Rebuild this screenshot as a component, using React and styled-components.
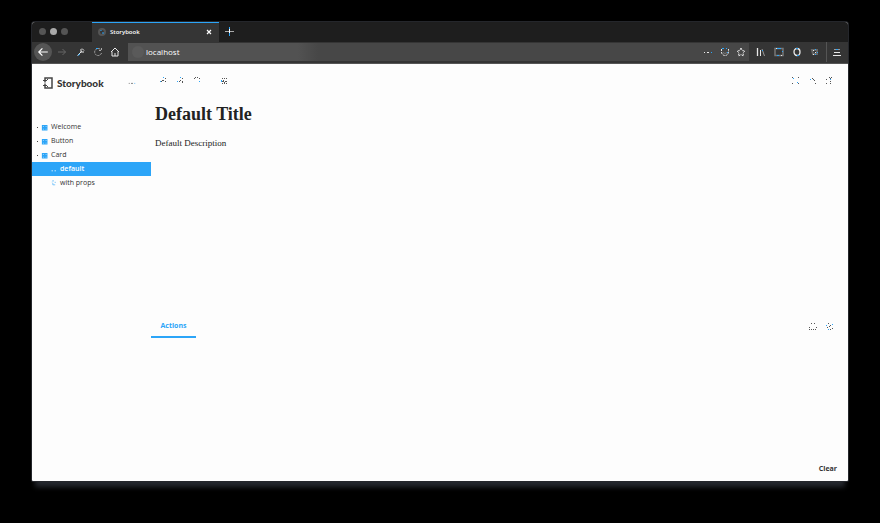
import React from "react";
import styled, { createGlobalStyle } from "styled-components";

const blue = "#2ca5f8";

const Global = createGlobalStyle`
  *, *::before, *::after { box-sizing: border-box; }
  body { margin: 0; background: #000; }
  button, input { font: inherit; color: inherit; }
  h1, p { margin: 0; }
`;

const Desktop = styled.div`
  display: flex;
  min-height: 100vh;
  padding: 22px 32px 42px;
  background: #000;
  font-family: "Open Sans", "Liberation Sans", sans-serif;
  font-size: 7px;
  line-height: 14px;
  color: #444;
`;

const BrowserWindow = styled.div`
  display: flex;
  flex-direction: column;
  flex: 1;
  min-width: 0;
  background: #fdfdfd;
  border-radius: 3px 3px 1px 1px;
  box-shadow: 0 0 0 1px #24262b, 0 9px 5px -3px #25282e;
`;

const TabStrip = styled.header`
  display: flex;
  height: 20px;
  background: #1e1e1e;
  border-radius: 3px 3px 0 0;
  color: #fff;
`;

const Lights = styled.div`
  display: flex;
  align-items: center;
  gap: 4px;
  width: 60px;
  height: 18px;
  padding-left: 7px;
`;

const Light = styled.span`
  width: 7px;
  height: 7px;
  border-radius: 50%;
  background: ${(p) => (p.$bright ? "#aaa" : "#555")};
`;

const BrowserTab = styled.div`
  display: flex;
  align-items: center;
  gap: 4px;
  width: 127px;
  padding: 0 6px 2px;
  border-top: 1px solid ${blue};
  background: #353535;
  font-size: 6px;
  font-weight: 600;
`;

const TabTitle = styled.span`
  flex: 1;
`;

const PlainButton = styled.button`
  display: inline-flex;
  align-items: center;
  justify-content: center;
  flex: none;
  width: ${(p) => p.$w || 10}px;
  height: ${(p) => p.$h || 14}px;
  padding: 0;
  border: 0;
  background: none;
  color: ${(p) => p.$tone || "inherit"};
`;

const NavBar = styled.nav`
  display: flex;
  align-items: center;
  height: 22px;
  padding: 0 3px 2px 2px;
  background: #353535;
  border-bottom: 1px solid #555;
  color: #e8e8e8;
`;

const BackButton = styled(PlainButton)`
  border-radius: 50%;
  background: #555;
  color: #fff;
`;

const AddressBar = styled.div`
  display: flex;
  align-items: center;
  flex: 1;
  gap: 2px;
  height: 18px;
  min-width: 0;
  margin: 0 3px 0 4px;
  padding: 0 1px 0 4px;
  background: linear-gradient(90deg, #525252 170px, #474747 190px);
`;

const SiteBadge = styled.span`
  width: 12px;
  height: 12px;
  border-radius: 50%;
  background: #5a5a5a;
`;

const AddressInput = styled.input`
  flex: 1;
  min-width: 0;
  height: 14px;
  padding: 0;
  border: 0;
  background: none;
  color: #fff;
  font-family: "Open Sans", sans-serif;
  font-size: 8px;
`;

const MenuDivider = styled.span`
  width: 1px;
  height: 20px;
  margin: 0 2px;
  background: #555;
`;

const Workspace = styled.div`
  display: flex;
  flex: 1;
`;

const Sidebar = styled.aside`
  width: 119px;
  flex: none;
`;

const Brand = styled.div`
  display: flex;
  align-items: center;
  gap: 4px;
  height: 38px;
  padding: 0 15px 0 11px;
`;

const BrandName = styled.span`
  flex: 1;
  color: #333;
  font-family: Lato, sans-serif;
  font-size: 10px;
  font-weight: 900;
`;

const Tree = styled.nav`
  display: flex;
  flex-direction: column;
  margin-top: 18px;
`;

const TreeLink = styled.a`
  display: flex;
  align-items: center;
  gap: 3px;
  height: 14px;
  padding-left: ${(p) => (p.$nested ? 19 : 4)}px;
  background: ${(p) => (p.$active ? blue : "transparent")};
  color: ${(p) => (p.$active ? "#fff" : "#333")};
  font-weight: ${(p) => (p.$active ? 600 : 400)};
  text-decoration: none;
`;

const Bullet = styled.span`
  width: 1px;
  height: 1px;
  margin-left: 1px;
  background: #444;
`;

const Main = styled.main`
  display: flex;
  flex-direction: column;
  flex: 1;
  min-width: 0;
`;

const Tools = styled.div`
  display: flex;
  align-items: center;
  gap: 7px;
  height: 34px;
  padding: 0 14px 0 7px;
  color: #555;
`;

const Gap = styled.span`
  width: ${(p) => p.$w}px;
`;

const Spacer = styled.span`
  flex: 1;
`;

const Preview = styled.section`
  flex: 1;
  padding: 4px;
  font-family: "Liberation Serif", serif;
  color: #222;
`;

const StoryTitle = styled.h1`
  font-size: 18px;
  line-height: 24px;
`;

const StoryText = styled.p`
  margin-top: 10px;
  font-size: 9px;
`;

const Panel = styled.section`
  display: flex;
  flex-direction: column;
  height: 165px;
`;

const PanelBar = styled.div`
  display: flex;
  align-items: stretch;
  gap: 7px;
  height: 22px;
  padding-right: 14px;
  color: #555;
`;

const PanelTab = styled.button`
  width: 45px;
  padding: 0;
  border: 0;
  border-bottom: 2px solid ${blue};
  background: none;
  color: ${blue};
  font-weight: 700;
`;

const PanelFooter = styled.div`
  display: flex;
  justify-content: flex-end;
  margin-top: auto;
  padding: 0 11px 5px 0;
`;

const ClearButton = styled.button`
  padding: 0;
  border: 0;
  background: none;
  color: #333;
  font-weight: 700;
`;

const Svg = styled.svg`
  display: block;
  flex: none;
  fill: none;
  stroke: currentColor;
  stroke-width: ${(p) => p.$stroke || 1};
`;

const shapes = {
  back: <path d="M9 5H1.5M4.5 2 1.5 5l3 3" />,
  forward: <path d="M1 5h7.5M5.5 2l3 3-3 3" />,
  wrench: <><path d="m1.5 8.5 4-4" /><path d="M5 2v3h3M6 1.5l2 2" /><path d="M2 8.5 4 7" stroke={blue} /></>,
  reload: <><path d="M8.5 6a3.5 3.5 0 1 1-.5-3M8.5 1v2.5H6" strokeDasharray="2 1" /><path d="M3 1.5h2" stroke={blue} /></>,
  home: <path d="m1 5 4-4 4 4M2 4.5V9h6V4.5M5 9V6" />,
  close: <path d="m2.5 2.5 5 5m0-5-5 5" />,
  plus: <><path d="M1 5.5h9" stroke="#aaa" /><path d="M5.5 1v9" stroke={blue} /><path d="M5.5 3v4" /></>,
  dots: <><path d="M1 5.5h1M4 5.5h2" /><path d="M8 5.5h1" stroke={blue} /></>,
  shield: <><path d="M1.5 2v3a3.500 3.500 0 0 0 7 0V2" strokeDasharray="2 1" /><path d="M3 5.500l2 1 2-1" stroke="#777" /><path d="M2 1.5h2m2 0h1m0 4h1" stroke={blue} /></>,
  star: <path d="m5 1 1.2 2.6 2.8.4-2 2 .5 3L5 7.5 2.5 9 3 6 1 4l2.8-.4z" strokeDasharray="2 1" />,
  library: <><path d="M1.5 1v8" strokeWidth="1.3" /><path d="M4.5 3v6" /><path d="m6 2 2.5 7" stroke="#999" /><path d="M6 3.5h1" stroke={blue} /></>,
  sidebar: <><path d="M1 8.5v-7h8v7z" stroke="#777" strokeWidth="1.5" /><path d="M3 1.5h4M3 8.5h2M8.5 4v1" stroke={blue} /><path d="M2 1.5h1M7 8.5h1" /></>,
  account: <><ellipse cx="5" cy="5" rx="3" ry="3.5" strokeWidth="1.3" /><path d="M4 1.5h2M5 8.5h2" stroke={blue} /></>,
  ext: <><path d="M2 3h5v4H3z" stroke="#666" strokeWidth="2" /><path d="M3 3.5h1M5 5.5h1M3 7.5h1" /><path d="M5 2.5h1M7 5.5h1M5 7.5h1" stroke={blue} /></>,
  menu: <><path d="M2 5.5h6M1 8.5h8" /><path d="M2 2.5h6" stroke="#999" /><path d="M4 2.5h2" stroke={blue} /></>,
  zoomIn: <><path d="M7 2.5h1M4 4.5h2M7 5.5h1M3 5.5h1" /><path d="M5 1.5h1M2 5.5h1" stroke={blue} /></>,
  zoomOut: <><path d="M7 2.5h1M5 4.5h1M7 5.5h1M4 5.5h1M7 6.500h1" /><path d="M5 1.5h1M2 5.5h1" stroke={blue} /></>,
  zoomReset: <><path d="M2 2.5h1M5 1.5h1M7 2.5h1M3 1.5h1" /><path d="M7 5.5h1" stroke={blue} /></>,
  grid: <><path d="M3 2.5h1M5 2.5h1M7 2.5h1M3 5.5h2M6 5.5h2M4 4.5h1M5.5 6v2M3 7.5h1M7 7.5h1" /><path d="M2 5.5h1M2 4.5h1" stroke={blue} /></>,
  expand: <><path d="M2 1.5h1M8 1.5h1M2 7.5h1M8 7.5h1" /><path d="M3 2.5h1M7 6.5h1" stroke={blue} /></>,
  share: <><path d="M5 2.5h1M7 4.5h1M8 7.5h1M6 3.5h1" /><path d="M3 3.5h1" stroke={blue} /></>,
  link: <><path d="M5 1.5h1M7 1.5h1M6 2.5h1M2 3.5h1M2 7.5h1M6 5.5h1M6 7.5h1" /><path d="M6 3.5h1" stroke={blue} /></>,
  bottom: <path d="M4 1.5h1M7 1.5h1M2 5.5h1M9 5.5h1M2 7.5h1M4 7.5h1M6 7.5h1M8 7.5h1" />,
  cross: <><path d="M4 1.5h1M6 3.5h1M5 4.5h1M3 5.5h1M6 7.5h1M8 6.5h1" /><path d="M8 2.5h1M2 3.5h1M4 7.5h1" stroke={blue} /></>,
  component: <><path d="M2 2h2.5v2.5H2zM6 2h2.5v2.5H6zM2 6h2.5v2.5H2zM6 6h2.5v2.5H6z" /><path d="M3.5 5h3" /></>,
  story: <path d="M2 1.5h3M7 3v2M3 5v3h4M2 3v1" />,
  activeStory: <path d="M1 8h2M6 8h2" strokeWidth="1.500" />,
};

function Icon({ name, size = 10, stroke }) {
  return (
    <Svg viewBox="0 0 10 10" width={size} height={size} $stroke={stroke} aria-hidden="true">
      {shapes[name]}
    </Svg>
  );
}

function ToolButton({ name, label, ...rest }) {
  return (
    <PlainButton aria-label={label} {...rest}>
      <Icon name={name} />
    </PlainButton>
  );
}

function BookMark() {
  return (
    <svg width="10" height="12" viewBox="0 0 10 12" fill="none" stroke="#444" aria-hidden="true">
      <path d="M2 1h7v10H2z" strokeWidth="1.5" />
      <path d="M0 3.5h4M0 8.5h4M4.5 2v1M4.5 9v1" />
      <path d="M2 5.500v1" stroke="#fdfdfd" strokeWidth="2" />
    </svg>
  );
}

const browserActions = [
  ["library", "Library"],
  ["sidebar", "Sidebars"],
  ["account", "Account"],
  ["ext", "Extensions"],
];

export default function App() {
  return (
    <>
      <Global />
      <Desktop>
        <BrowserWindow>
          <TabStrip>
            <Lights><Light /><Light $bright /><Light /></Lights>
            <BrowserTab>
              <Svg width="8" height="8" viewBox="0 0 8 8" aria-hidden="true">
                <circle cx="4" cy="4" r="3" stroke="#555" strokeWidth="2" />
                <path d="M3 2v1M5 4v2" stroke={blue} />
              </Svg>
              <TabTitle>Storybook</TabTitle>
              <PlainButton $w={8} aria-label="Close tab"><Icon name="close" size={8} stroke={1.5} /></PlainButton>
            </BrowserTab>
            <PlainButton $w={19} $h={18} aria-label="New tab"><Icon name="plus" /></PlainButton>
          </TabStrip>
          <NavBar>
            <BackButton $w={18} $h={18} aria-label="Back"><Icon name="back" size={12} /></BackButton>
            <PlainButton $w={20} $tone="#666" aria-label="Forward"><Icon name="forward" /></PlainButton>
            <PlainButton $w={18} aria-label="Developer tools"><Icon name="wrench" /></PlainButton>
            <PlainButton $w={16} $tone="#aaa" aria-label="Reload"><Icon name="reload" /></PlainButton>
            <PlainButton $w={18} aria-label="Home"><Icon name="home" /></PlainButton>
            <AddressBar>
              <SiteBadge />
              <AddressInput aria-label="Address" defaultValue="localhost" />
              <PlainButton $w={16} aria-label="Page actions"><Icon name="dots" /></PlainButton>
              <PlainButton $w={14} aria-label="Tracking protection"><Icon name="shield" /></PlainButton>
              <PlainButton $w={14} aria-label="Bookmark"><Icon name="star" /></PlainButton>
            </AddressBar>
            {browserActions.map(([name, label]) => (
              <PlainButton key={name} $w={18} aria-label={label}><Icon name={name} /></PlainButton>
            ))}
            <MenuDivider />
            <PlainButton $w={16} aria-label="Menu"><Icon name="menu" /></PlainButton>
          </NavBar>
          <Workspace>
            <Sidebar>
              <Brand>
                <BookMark />
                <BrandName>Storybook</BrandName>
                <PlainButton $w={8} aria-label="Shortcuts"><Icon name="dots" size={8} /></PlainButton>
              </Brand>
              <Tree>
                {["Welcome", "Button", "Card"].map((name) => (
                  <TreeLink key={name} href={`#${name}`}>
                    <Bullet />
                    <PlainButton as="span" $w={7} $tone={blue}><Icon name="component" size={7} stroke={1.5} /></PlainButton>
                    {name}
                  </TreeLink>
                ))}
                <TreeLink href="#default" $nested $active><Icon name="activeStory" size={6} />default</TreeLink>
                <TreeLink href="#with-props" $nested>
                  <PlainButton as="span" $w={6} $tone={blue}><Icon name="story" size={6} /></PlainButton>
                  with props
                </TreeLink>
              </Tree>
            </Sidebar>
            <Main>
              <Tools>
                <ToolButton name="zoomIn" label="Zoom in" />
                <ToolButton name="zoomOut" label="Zoom out" />
                <ToolButton name="zoomReset" label="Reset zoom" />
                <Gap $w={3} />
                <ToolButton name="grid" label="Background" />
                <Spacer />
                <ToolButton name="expand" label="Full screen" />
                <ToolButton name="share" label="Open in new tab" />
                <ToolButton name="link" label="Copy link" />
              </Tools>
              <Preview>
                <StoryTitle>Default Title</StoryTitle>
                <StoryText>Default Description</StoryText>
              </Preview>
              <Panel>
                <PanelBar>
                  <PanelTab>Actions</PanelTab>
                  <Spacer />
                  <ToolButton name="bottom" label="Change orientation" $h={22} />
                  <ToolButton name="cross" label="Hide addons" $h={22} />
                </PanelBar>
                <PanelFooter><ClearButton>Clear</ClearButton></PanelFooter>
              </Panel>
            </Main>
          </Workspace>
        </BrowserWindow>
      </Desktop>
    </>
  );
}
